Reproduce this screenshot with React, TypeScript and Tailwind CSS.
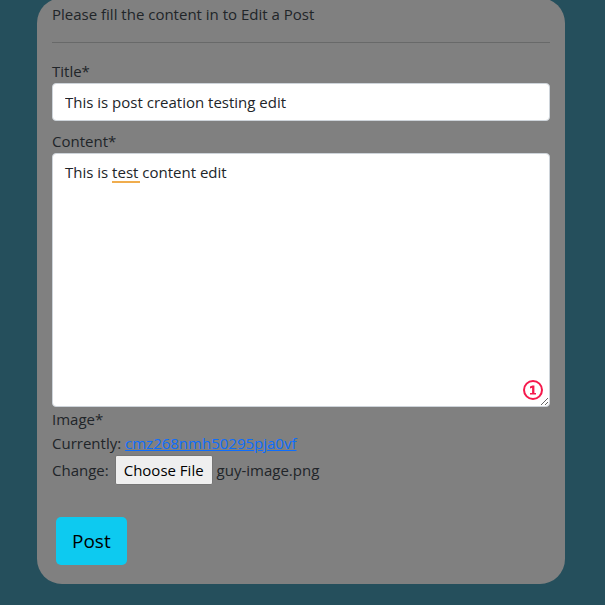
import { useRef, useState } from "react";

const field =
  "block w-full rounded border border-[#ced4da] bg-white px-3 py-1.5 text-[#212529] outline-none";

export default function App() {
  const picker = useRef<HTMLInputElement>(null);
  const [fileName, setFileName] = useState("guy-image.png");

  return (
    <div className="min-h-screen overflow-hidden bg-[#254f5c] pr-10 pb-5 pl-[37px] font-['Open_Sans','Noto_Sans',sans-serif] text-[15px] leading-6 text-[#212529]">
      <main className="-mt-0.5 rounded-[25px] bg-[#808080] px-[15px] pt-1 pb-[19px]">
        <p>Please fill the content in to Edit a Post</p>
        <hr className="my-4 border-t border-[#686969]" />
        <form onSubmit={(e) => e.preventDefault()}>
          <label htmlFor="title" className="block">
            Title*
          </label>
          <input
            id="title"
            type="text"
            defaultValue="This is post creation testing edit"
            className={`${field} h-[38px]`}
          />

          <label htmlFor="content" className="mt-2 block">
            Content*
          </label>
          <div className="relative">
            <textarea
              id="content"
              spellCheck={false}
              defaultValue="This is test content edit"
              className={`${field} h-[254px] resize-y`}
            />
            <span className="absolute top-7 left-[60px] h-0.5 w-7 bg-[#f0ad4e]" />
            <svg
              viewBox="0 0 20 20"
              className="absolute right-[7px] bottom-[7px] size-5"
              aria-hidden="true"
            >
              <circle cx="10" cy="10" r="9" fill="#fff" stroke="#f5194c" strokeWidth="2" />
              <path
                d="M7 6.6 9.4 5.4h2V13H13v1.6H7V13h2.1V7.7L7 8.4Z"
                fill="#f5194c"
              />
            </svg>
          </div>

          <label htmlFor="image" className="block">
            Image*
          </label>
          <div>
            Currently:{" "}
            <a href="#image" className="text-[#0d6efd] underline">
              cmz268nmh50295pja0vf
            </a>
          </div>
          <div className="flex items-center">
            <span>Change:</span>
            <input
              ref={picker}
              id="image"
              type="file"
              accept="image/*"
              tabIndex={-1}
              className="sr-only"
              onChange={(e) => setFileName(e.target.files?.[0]?.name ?? fileName)}
            />
            <button
              type="button"
              onClick={() => picker.current?.click()}
              className="ml-1.5 h-[30px] rounded-xs border border-[#767676] bg-[#efefef] px-2 text-black"
            >
              Choose File
            </button>
            <span className="ml-1">{fileName}</span>
          </div>

          <button
            type="submit"
            className="mt-8 ml-1 h-12 rounded-[5px] bg-[#0dcaf0] px-4 text-[19px] text-black"
          >
            Post
          </button>
        </form>
      </main>
    </div>
  );
}
